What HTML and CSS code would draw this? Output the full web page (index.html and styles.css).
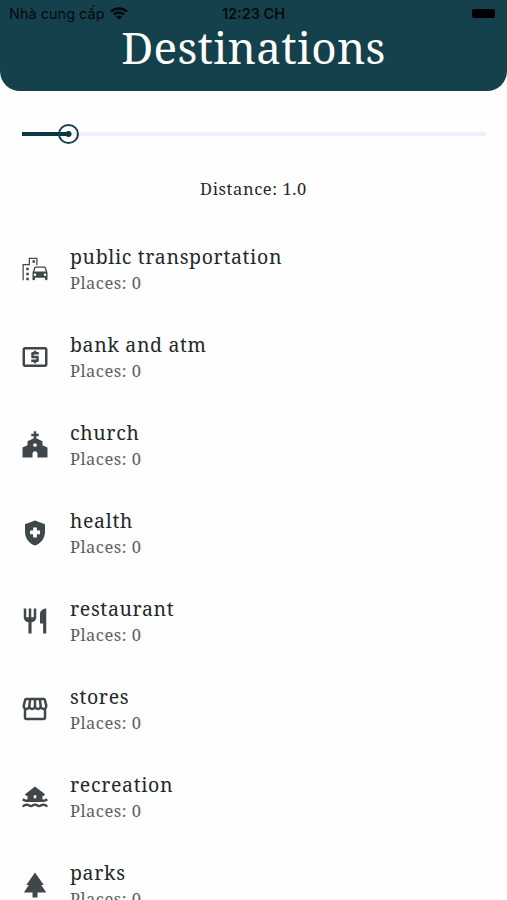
FILE: index.html
```html
<!DOCTYPE html>
<html lang="vi">

<head>
  <meta charset="UTF-8">
  <meta name="viewport" content="width=device-width, initial-scale=1.0">
  <title>Destinations</title>
  <link rel="stylesheet" href="styles.css">
</head>

<body>
  <header class="header">
    <div class="status-bar">
      <div class="carrier">
        <span>Nhà cung cấp</span>
        <svg class="wifi" viewBox="0 0 18 13">
          <path d="M1 4.6a11.6 11.6 0 0 1 16 0M3.9 7.6a7.4 7.4 0 0 1 10.2 0" fill="none" stroke="currentColor" stroke-width="2.5" />
          <path d="M9 12.8 5.9 9.7a4.4 4.4 0 0 1 6.2 0z" fill="currentColor" />
        </svg>
      </div>
      <div class="time">12:23 CH</div>
      <div class="battery"></div>
    </div>
    <h1>Destinations</h1>
  </header>

  <div class="slider">
    <div class="slider-fill"></div>
    <div class="slider-thumb"></div>
  </div>
  <p class="distance">Distance: 1.0</p>

  <ul class="places">
    <li class="place">
      <svg class="icon" viewBox="0 0 24 24">
        <path fill-rule="evenodd" d="M20.57 10.66c-.14-.4-.52-.66-.97-.66h-7.19c-.46 0-.83.26-.98.66L10 14.77l.01 5.51c0 .38.31.72.69.72h.62c.38 0 .68-.38.68-.76V19h8v1.24c0 .38.31.76.69.76h.61c.38 0 .69-.34.69-.72l.01-1.37v-4.14l-1.43-4.11zM12.41 11h7.19l1.03 3h-9.25l1.03-3zM12 17.5a1 1 0 1 1 0-2 1 1 0 0 1 0 2zm8 0a1 1 0 1 1 0-2 1 1 0 0 1 0 2z" />
        <path d="M14 9V3H7v5H2v13h1V9h5V4h5v5zM5 11h2v2H5zM10 5h2v2h-2zM5 15h2v2H5zM5 19h2v2H5z" />
      </svg>
      <div class="place-text">
        <h2>public transportation</h2>
        <p>Places: 0</p>
      </div>
    </li>
    <li class="place">
      <svg class="icon" viewBox="0 0 24 24">
        <path d="M11 17h2v-1h1c.55 0 1-.45 1-1v-3c0-.55-.45-1-1-1h-3v-1h4V8h-2V7h-2v1h-1c-.55 0-1 .45-1 1v3c0 .55.45 1 1 1h3v1H9v2h2v1zm9-13H4c-1.11 0-1.99.89-1.99 2L2 18c0 1.11.89 2 2 2h16c1.11 0 2-.89 2-2V6c0-1.11-.89-2-2-2zm0 14H4V6h16v12z" />
      </svg>
      <div class="place-text">
        <h2>bank and atm</h2>
        <p>Places: 0</p>
      </div>
    </li>
    <li class="place">
      <svg class="icon" viewBox="0 0 24 24">
        <path d="M18 12.22V9l-5-2.5V5h2V3h-2V1h-2v2H9v2h2v1.5L6 9v3.22L2 14v8h8v-3c0-1.1.9-2 2-2s2 .9 2 2v3h8v-8l-4-1.78zM12 13.5c-.83 0-1.500-.67-1.500-1.500s.67-1.500 1.500-1.500 1.500.67 1.500 1.500-.67 1.500-1.500 1.500z" />
      </svg>
      <div class="place-text">
        <h2>church</h2>
        <p>Places: 0</p>
      </div>
    </li>
    <li class="place">
      <svg class="icon" viewBox="0 0 24 24">
        <path fill-rule="evenodd" d="M12 2 4 5v6.090c0 5.050 3.410 9.760 8 10.910 4.590-1.150 8-5.860 8-10.910V5l-8-3zM10.500 13H8v-3h2.500V7.500h3V10H16v3h-2.500v2.500h-3V13z" />
      </svg>
      <div class="place-text">
        <h2>health</h2>
        <p>Places: 0</p>
      </div>
    </li>
    <li class="place">
      <svg class="icon" viewBox="0 0 24 24">
        <path d="M11 9H9V2H7v7H5V2H3v7c0 2.120 1.660 3.840 3.750 3.970V22h2.500v-9.030C11.340 12.840 13 11.120 13 9V2h-2v7zm5-3v8h2.500v8H21V2c-2.760 0-5 2.240-5 4z" />
      </svg>
      <div class="place-text">
        <h2>restaurant</h2>
        <p>Places: 0</p>
      </div>
    </li>
    <li class="place">
      <svg class="icon" viewBox="0 0 24 24">
        <path d="M21.9 8.89l-1.05-4.37c-.22-.9-1-1.52-1.91-1.52H5.05c-.9 0-1.69.63-1.9 1.52L2.1 8.89c-.24 1.02-.02 2.06.62 2.88.08.11.19.19.28.29V19c0 1.1.9 2 2 2h14c1.1 0 2-.9 2-2v-6.94c.09-.09.2-.18.28-.28.64-.82.87-1.87.62-2.89zm-2.99-3.9l1.05 4.37c.1.42.01.84-.25 1.17-.14.18-.44.47-.94.47-.61 0-1.14-.49-1.21-1.14L16.98 5l1.93-.01zM13 5h1.96l.54 4.52c.05.39-.07.78-.33 1.07-.22.26-.54.41-.95.41-.67 0-1.22-.59-1.22-1.31V5zM8.49 9.52L9.04 5H11v4.69c0 .72-.55 1.31-1.29 1.31-.34 0-.65-.15-.89-.41-.25-.29-.37-.68-.33-1.07zm-4.45-.16L5.05 5h1.97l-.58 4.86c-.08.65-.6 1.14-1.21 1.14-.49 0-.8-.29-.93-.47-.27-.32-.36-.75-.26-1.17zM5 19v-6.03c.08.01.15.03.23.03.87 0 1.66-.36 2.24-.95.6.6 1.4.95 2.31.95.87 0 1.65-.36 2.23-.93.59.57 1.39.93 2.29.93.84 0 1.64-.35 2.24-.95.58.59 1.37.95 2.24.95.08 0 .15-.02.23-.03V19H5z" />
      </svg>
      <div class="place-text">
        <h2>stores</h2>
        <p>Places: 0</p>
      </div>
    </li>
    <li class="place">
      <svg class="icon" viewBox="0 0 24 24">
        <path fill-rule="evenodd" d="M12 3.500 4 9.800l1.200 1.500.8-.6V14c-1.500 0-2.500-.3-3.300-1l-1 1.500C3 15.700 5 16 7 16h10c2 0 4-.3 5.300-1.500l-1-1.500c-.8.7-1.800 1-3.300 1v-3.300l.8.6L20 9.800zM11 10.500h2V13h-2z" />
        <path d="M2 19.200c1.700 0 1.700-1.200 3.300-1.200s1.700 1.200 3.400 1.200S10.300 18 12 18s1.700 1.200 3.300 1.200S17 18 18.700 18s1.600 1.200 3.300 1.200" fill="none" stroke="currentColor" stroke-width="1.8" />
      </svg>
      <div class="place-text">
        <h2>recreation</h2>
        <p>Places: 0</p>
      </div>
    </li>
    <li class="place">
      <svg class="icon" viewBox="0 0 24 24">
        <path d="M17 12h2L12 2 5.050 12H7l-3.900 6h6.920v4h3.960v-4H21z" />
      </svg>
      <div class="place-text">
        <h2>parks</h2>
        <p>Places: 0</p>
      </div>
    </li>
  </ul>
</body>

</html>
```
FILE: styles.css
```css
* {
  box-sizing: border-box;
  margin: 0;
  padding: 0;
}

body {
  height: 100vh;
  overflow: hidden;
  background: #fefefe;
  color: #25282a;
  font-family: "Noto Serif", "Droid Serif", "DejaVu Serif Condensed", "DejaVu Serif", serif;
}

.header {
  height: 91px;
  background: #15414c;
  border-radius: 0 0 20px 20px;
}

.status-bar {
  display: grid;
  grid-template-columns: 1fr auto 1fr;
  align-items: center;
  height: 27px;
  padding: 0 9px;
  color: #03090c;
  font-family: Inter, sans-serif;
  font-size: 14.5px;
}

.carrier {
  display: flex;
  align-items: center;
  gap: 5px;
}

.wifi {
  width: 18px;
  height: 13px;
}

.time {
  font-weight: 600;
}

.battery {
  justify-self: end;
  width: 23px;
  height: 9px;
  margin-right: 3px;
  background: #000;
  border-radius: 2px;
}

h1 {
  color: #fff;
  font-size: 44px;
  font-weight: 400;
  line-height: 40px;
  letter-spacing: 0.25px;
  text-align: center;
}

.slider {
  position: relative;
  height: 4px;
  margin: 41px 21px 0 22px;
  background: #efeefe;
  border-radius: 2px;
}

.slider-fill {
  width: 47px;
  height: 4px;
  background: #0d3843;
}

/* knob sits over the track */
.slider-thumb {
  position: absolute;
  top: -8px;
  left: 36px;
  width: 21px;
  height: 20px;
  border: 2px solid #15414c;
  border-radius: 50%;
  background: radial-gradient(circle, #0d3843 2.5px, transparent 3.5px);
}

.distance {
  margin-top: 41px;
  font-size: 16.5px;
  line-height: 24px;
  letter-spacing: 0.6px;
  text-align: center;
}

.places {
  margin-top: 24px;
  list-style: none;
}

.place {
  display: flex;
  align-items: center;
  gap: 20px;
  height: 88px;
  padding-left: 20px;
}

.icon {
  width: 30px;
  height: 30px;
  fill: #3f474b;
  color: #3f474b;
}

.place-text h2 {
  font-size: 19.5px;
  font-weight: 400;
  line-height: 27px;
  letter-spacing: 0.65px;
}

.place-text p {
  color: #5a5e60;
  font-size: 16.5px;
  line-height: 25px;
  letter-spacing: 0.5px;
}
```
